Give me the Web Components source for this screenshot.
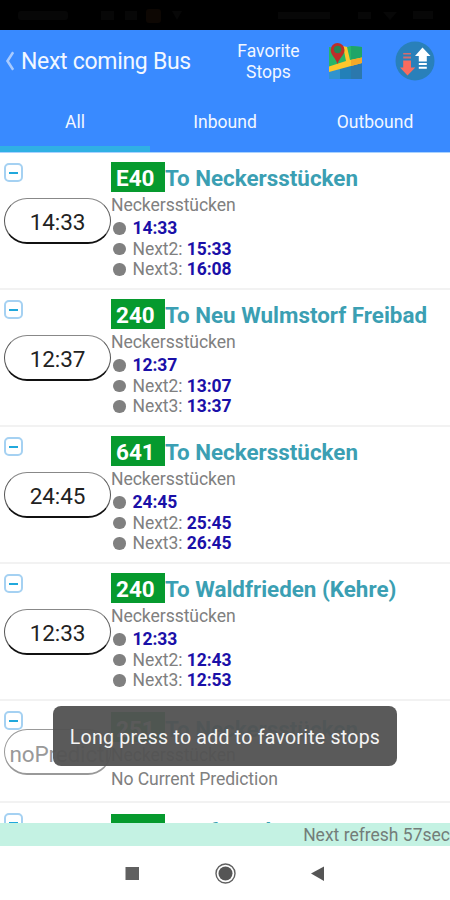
<!DOCTYPE html>
<html lang="en">
<head>
<meta charset="utf-8">
<title>Next coming Bus</title>
<style>
html,body{margin:0;padding:0;background:#fff;overflow:hidden}
body{width:450px;height:900px}
</style>
</head>
<body>
<bus-app></bus-app>
<script>
const define = (name, html) => customElements.define(name, class extends HTMLElement {
  constructor() {
    super();
    this.attachShadow({mode: 'open'});
  }
  connectedCallback() {
    this.shadowRoot.innerHTML = typeof html === 'function' ? html(this) : html;
  }
});

define('status-bar', `<style>
:host{display:block;height:30px;background:#000;flex:none}
svg{display:block}
</style>
<svg width="450" height="30" fill="#070707"><rect x="18" y="11" width="50" height="9" rx="3"/><path d="M101 11h13v9h-13zM125 11h12v9h-12z"/><rect x="146" y="9" width="15" height="14" rx="3" fill="#0d0703"/><path d="M172 11h10l-5 9zM278 12h52v7h-52zM358 12h13v7h-13zM383 12h14l-7 8zM413 11h20v8h-20z"/></svg>`);

define('map-icon', `<style>:host{display:block;width:35px;height:38px}svg{display:block}</style>
<svg width="35" height="38" viewBox="0 0 35 38">
<path d="M1 5L12 7L23 4L34 5V17L1 28Z" fill="#27b568"/>
<path d="M23 4L34 5V17L23 20Z" fill="#1fa568"/>
<path d="M1 27L34 20V37H1Z" fill="#2f93cf"/>
<path d="M12 25L23 22V37H12Z" fill="#2380b8"/>
<path d="M23 22L34 20V37H23Z" fill="#2b78ad"/>
<path d="M15 4L19 5L22 18L34 15.500V21L1 30V24.500L18 19Z" fill="#fdc62c"/>
<path d="M23 18L34 15.500V21L23 24Z" fill="#f5a828"/>
<path d="M9.500 1A7 7 0 0 0 2.700 8C2.700 13 7 15 9.500 22C12 15 16.500 13 16.500 8A7 7 0 0 0 9.500 1Z" fill="#bd2d2a"/>
<circle cx="9.600" cy="7.500" r="3.700" fill="#258454"/>
</svg>`);

define('swap-icon', `<style>:host{display:block;width:40px;height:40px}svg{display:block}</style>
<svg width="40" height="40" viewBox="0 0 40 40">
<circle cx="20" cy="20" r="19.500" fill="#2980ba"/>
<path d="M8.200 19.500h7.800v7h4.300L12.500 34.500L5 26.500h3.200z" fill="#f96b5e"/>
<path d="M8.200 12h7.800v1.500H8.200zM8.200 15.500h7.800v2H8.200z" fill="#d46c6e"/>
<path d="M27.500 6.500L35.500 15H31.800v5.500h-8V15H20z" fill="#fff"/>
<path d="M23.800 22h8v2h-8zM23.800 25.700h8v2h-8z" fill="#fff"/>
</svg>`);

define('app-header', `<style>
:host{display:flex;height:62px;color:#f2f7ff;font-family:Roboto,sans-serif;align-items:center}
.back{width:9px;height:20px;margin:-1px 0 0 5px;display:block}
h1{font-weight:400;font-size:23px;line-height:28px;letter-spacing:-.3px;margin:1px 0 0 7px;width:202px;white-space:nowrap}
.fav{width:91px;text-align:center;font-size:17.500px;line-height:20.500px;color:#f2f7ff;padding-top:1px}
map-icon{margin-left:14px}
swap-icon{margin-left:32px;margin-top:-1px}
</style>
<svg class="back" viewBox="0 0 9 20"><path d="M8.200 1.200L2.500 10L8.200 18.800" fill="none" stroke="#a9cbff" stroke-width="2.600"/></svg>
<h1>Next coming Bus</h1><div class="fav">Favorite<br>Stops</div><map-icon></map-icon><swap-icon></swap-icon>`);

define('tab-item', `<style>
:host{display:flex;flex:1;flex-direction:column;align-items:center;justify-content:flex-end;color:#f2f7ff;font:400 17.500px/22px Roboto,sans-serif;letter-spacing:.02px}
span{margin-bottom:13px}
i{height:6px;width:100%}
:host([selected]) i{background:#30b0e4}
</style><span><slot></slot></span><i></i>`);

define('tab-bar', `<style>:host{display:flex;height:60px}</style><slot></slot>`);

define('collapse-box', `<style>
:host{display:flex;box-sizing:border-box;width:19px;height:19px;border:2px solid #a5d1f2;border-radius:5px;align-items:center;justify-content:center;background:#fff}
i{width:9px;height:2px;background:#20a8dc}
</style><i></i>`);

define('time-pill', `<style>
:host{display:flex;box-sizing:border-box;width:107px;height:46px;border:1px solid #555;border-top-color:#888;border-bottom:2px solid #111;border-radius:23px;align-items:center;justify-content:center;overflow:hidden;font:400 22.500px/28px Roboto,sans-serif;letter-spacing:-.15px;color:#222;white-space:nowrap}
:host([muted]){color:#999;border-color:#999}
:host([muted]) span{width:96px}
span{padding-top:4px}
</style><span><slot></slot></span>`);

define('bus-row', el => {
  const times = (el.getAttribute('times') || '').split(' ').filter(Boolean);
  const body = times.length
    ? '<ul>' + times.map((t, i) => `<li><i></i><span>${i ? `Next${i + 1}: ` : ''}<b>${t}</b></span></li>`).join('') + '</ul>'
    : '<p class="none">No Current Prediction</p>';
  return `<style>
:host{display:flex;flex:none;box-sizing:border-box;height:137px;border-bottom:2px solid #f2f2f2;font-family:Roboto,sans-serif;color:#808080}
:host([short]){height:102px}
.left{width:111px;padding:10px 0 0 4px;box-sizing:border-box}
time-pill{margin-top:15.500px}
:host([short]) time-pill{margin-top:-1px}
.main{padding-top:9px;white-space:nowrap}
:host([short]) .main{padding-top:11px}
.head{display:flex;height:30px;align-items:center}
.badge{box-sizing:border-box;width:54px;height:30px;background:#069a2e;color:#fff;font-weight:700;font-size:22.500px;line-height:32px;padding-left:5px}
h2{margin:2px 0 0;font-weight:700;font-size:22.400px;line-height:30px;color:#3b9fb3}
:host([short]) .badge{line-height:34px}
:host([short]) h2{margin-top:4px}
p{margin:2px 0 0;font-size:17.600px;line-height:22px;letter-spacing:-.08px}
p.none{margin-top:2px}
ul{margin:2px 0 0;padding:0;list-style:none}
li{display:flex;align-items:center;height:20.500px;font-size:17.500px;line-height:20.500px;letter-spacing:-.06px}
i{width:12.500px;height:12.500px;border-radius:50%;background:#808080;margin:0 7px 0 2px}
b{color:#1a10a8;font-weight:700}
</style>
<div class="left"><collapse-box></collapse-box><time-pill ${times.length ? '' : 'muted'}>${times[0] || 'noPrediction'}</time-pill></div>
<div class="main"><div class="head"><div class="badge">${el.getAttribute('line')}</div><h2><slot></slot></h2></div><p>Neckersstücken</p>${body}</div>`;
});

define('toast-message', `<style>
:host{position:absolute;left:53px;top:706px;width:344px;height:60px;border-radius:8px;background:rgba(83,83,83,.955);display:flex;align-items:center;justify-content:center;color:#f4f4f4;font:400 19.500px/24px Roboto,sans-serif;white-space:nowrap;letter-spacing:.25px}
span{padding-top:3px}
</style><span><slot></slot></span>`);

define('refresh-bar', `<style>
:host{display:block;height:23px;flex:none;background:#c4f2e3;color:#737d79;text-align:right;font:400 17.500px/25px Roboto,sans-serif;white-space:nowrap}
</style><slot></slot>`);

define('nav-bar', `<style>
:host{display:flex;height:54px;flex:none;background:#fff}
svg{display:block}
</style><svg width="450" height="54"><rect x="125.500" y="21" width="13.500" height="13" fill="#606060"/><circle cx="225.500" cy="27.500" r="9.500" fill="#fff" stroke="#606060" stroke-width="1.400"/><circle cx="225.500" cy="27.500" r="7" fill="#555"/><path d="M311 27.500L324 20.500V35Z" fill="#555"/></svg>`);

define('bus-app', `<style>
:host{display:flex;flex-direction:column;position:relative;width:450px;height:900px;overflow:hidden;background:#fff}
header{background:#398aff;height:122px;border-bottom:1px solid #a9d2ff;flex:none}
main{height:670px;flex:none;overflow:hidden;display:flex;flex-direction:column}
</style>
<status-bar></status-bar>
<header><app-header></app-header><tab-bar><tab-item selected>All</tab-item><tab-item>Inbound</tab-item><tab-item>Outbound</tab-item></tab-bar></header>
<main>
<bus-row line="E40" times="14:33 15:33 16:08">To Neckersstücken</bus-row>
<bus-row line="240" times="12:37 13:07 13:37">To Neu Wulmstorf Freibad</bus-row>
<bus-row line="641" times="24:45 25:45 26:45">To Neckersstücken</bus-row>
<bus-row line="240" times="12:33 12:43 12:53">To Waldfrieden (Kehre)</bus-row>
<bus-row line="251" short>To Neckersstücken</bus-row>
<bus-row line="251" short>To Bf. Harburg</bus-row>
</main>
<refresh-bar>Next refresh 57sec</refresh-bar>
<nav-bar></nav-bar>
<toast-message>Long press to add to favorite stops</toast-message>`);
</script>
</body>
</html>
